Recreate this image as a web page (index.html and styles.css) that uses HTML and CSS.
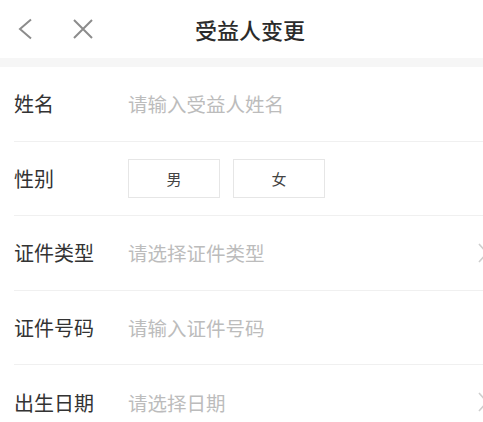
FILE: index.html
```html
<!DOCTYPE html>
<html lang="zh-CN">
<head>
<meta charset="utf-8">
<title>受益人变更</title>
<link rel="stylesheet" href="styles.css">
</head>
<body>
<div class="page">
  <header class="nav">
    <div class="nav-left">
      <span class="nav-btn back">
        <svg width="16" height="22" viewBox="0 0 16 22"><polyline points="14,1.5 3,11 14,20.5" fill="none" stroke="#8c8c8c" stroke-width="2"/></svg>
      </span>
      <span class="nav-btn close">
        <svg width="22" height="22" viewBox="0 0 22 22"><path d="M2 2 L20 20 M20 2 L2 20" fill="none" stroke="#8c8c8c" stroke-width="2"/></svg>
      </span>
    </div>
    <h1 class="nav-title">受益人变更</h1>
    <div class="nav-right"></div>
  </header>
  <div class="band"></div>
  <main class="form">
    <div class="row">
      <span class="label">姓名</span>
      <span class="placeholder">请输入受益人姓名</span>
    </div>
    <div class="row">
      <span class="label">性别</span>
      <div class="genders">
        <span class="gender">男</span>
        <span class="gender">女</span>
      </div>
    </div>
    <div class="row">
      <span class="label">证件类型</span>
      <span class="placeholder">请选择证件类型</span>
      <svg class="chev" width="12" height="22" viewBox="0 0 12 22"><polyline points="2,2 10,11 2,20" fill="none" stroke="#cfcfcf" stroke-width="1.6"/></svg>
    </div>
    <div class="row">
      <span class="label">证件号码</span>
      <span class="placeholder">请输入证件号码</span>
    </div>
    <div class="row">
      <span class="label">出生日期</span>
      <span class="placeholder">请选择日期</span>
      <svg class="chev" width="12" height="22" viewBox="0 0 12 22"><polyline points="2,2 10,11 2,20" fill="none" stroke="#cfcfcf" stroke-width="1.6"/></svg>
    </div>
  </main>
</div>
</body>
</html>
```

FILE: styles.css
```css
* { box-sizing: border-box; }
html, body {
  margin: 0;
  padding: 0;
  background: #fff;
  overflow: hidden;
}
body {
  font-family: "Noto Sans CJK SC", "Noto Sans", sans-serif;
  color: #333;
}
.page {
  width: 483px;
}
.nav {
  height: 58px;
  display: flex;
  align-items: center;
}
.nav-left {
  width: 110px;
  display: flex;
  align-items: center;
  padding-left: 17px;
}
.nav-btn {
  display: flex;
  align-items: center;
}
.back { width: 55px; }
.close { width: 22px; }
.nav-title {
  flex: 1;
  margin: 0;
  text-align: center;
  font-size: 22px;
  font-weight: 500;
  color: #2b2b2b;
  line-height: 30px;
}
.nav-right { width: 93px; }
.band {
  height: 9px;
  background: #f6f6f6;
}
.form {
  padding-left: 14px;
}
.row {
  height: 74.5px;
  display: flex;
  align-items: center;
  border-bottom: 1px solid #f0f0f0;
}
.row:last-child { border-bottom: none; }
.label {
  width: 114px;
  flex-shrink: 0;
  font-size: 20px;
  color: #333;
}
.placeholder {
  flex: 1;
  font-size: 19.5px;
  color: #bcbcbc;
}
.chev {
  flex-shrink: 0;
  margin-right: -6px;
}
.genders {
  display: flex;
  gap: 13px;
}
.gender {
  width: 92px;
  height: 39px;
  border: 1px solid #e6e6e6;
  display: flex;
  align-items: center;
  justify-content: center;
  font-size: 15px;
  color: #444;
}
```
